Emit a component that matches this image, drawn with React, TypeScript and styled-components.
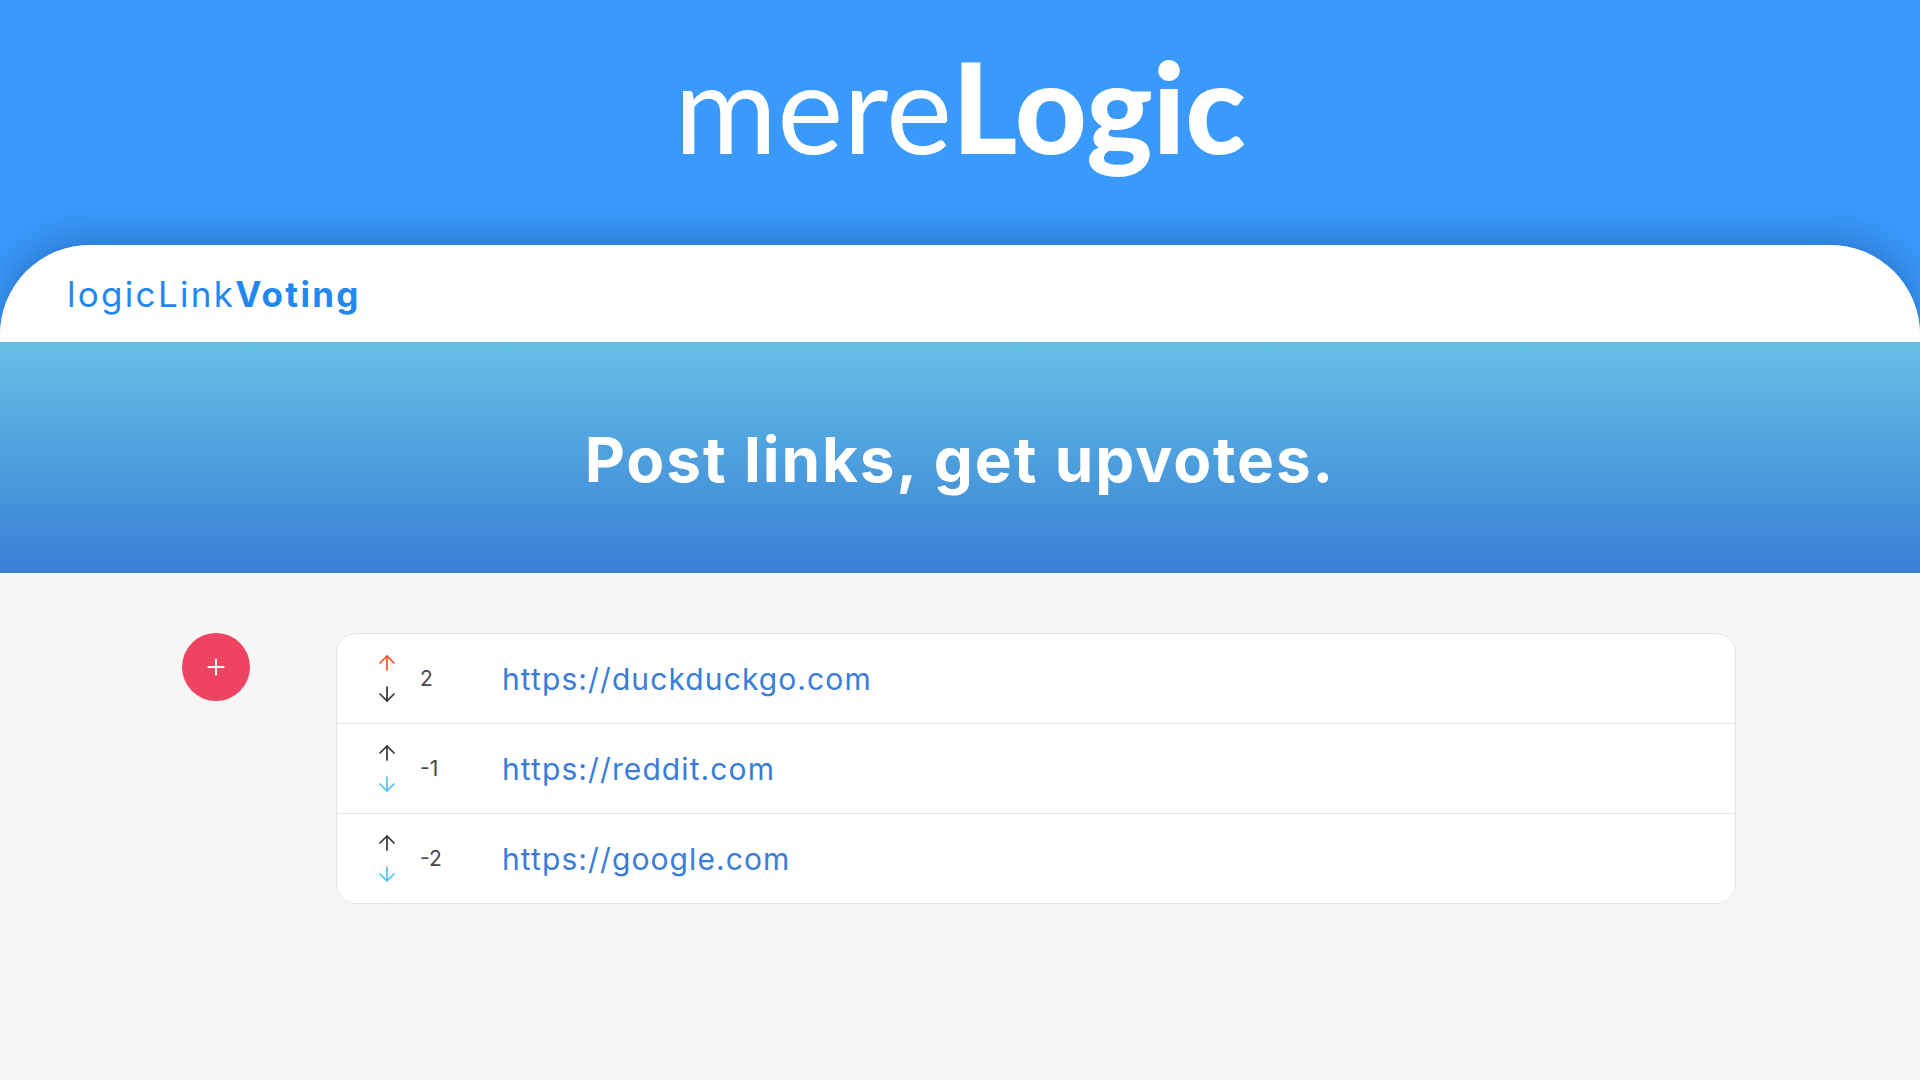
import React from "react";
import styled, { createGlobalStyle } from "styled-components";
import { ArrowUp, ArrowDown, Plus } from "lucide-react";

type Vote = "up" | "down" | null;

const links: { url: string; score: number; vote: Vote }[] = [
  { url: "https://duckduckgo.com", score: 2, vote: "up" },
  { url: "https://reddit.com", score: -1, vote: "down" },
  { url: "https://google.com", score: -2, vote: "down" },
];

const App = () => {
  return (
    <Page>
      <GlobalStyle />
      <Header>
        <Brand>
          mere<strong>Logic</strong>
        </Brand>
      </Header>
      <Card>
        <Nav>
          <AppName>
            logicLink<strong>Voting</strong>
          </AppName>
        </Nav>
        <Hero>
          <Tagline>Post links, get upvotes.</Tagline>
        </Hero>
        <Content>
          <AddButton aria-label="Add link">
            <Plus size={26} strokeWidth={1.8} />
          </AddButton>
          <LinkList>
            {links.map((link) => (
              <Row key={link.url}>
                <Votes>
                  <VoteButton $active={link.vote === "up"} $kind="up">
                    <ArrowUp size={24} strokeWidth={1.7} />
                  </VoteButton>
                  <VoteButton $active={link.vote === "down"} $kind="down">
                    <ArrowDown size={24} strokeWidth={1.7} />
                  </VoteButton>
                </Votes>
                <Score>{link.score}</Score>
                <Url href={link.url}>{link.url}</Url>
              </Row>
            ))}
          </LinkList>
        </Content>
      </Card>
    </Page>
  );
};

export default App;

const GlobalStyle = createGlobalStyle`
  html, body {
    margin: 0;
    padding: 0;
  }
  body {
    font-family: Inter, "Open Sans", sans-serif;
    background: #3a9afc;
  }
`;

const Page = styled.div`
  min-height: 100vh;
  display: flex;
  flex-direction: column;
  background: #3a9afc;
  overflow: hidden;
`;

const Header = styled.header`
  height: 245px;
  box-sizing: border-box;
  padding-top: 44px;
  display: flex;
  justify-content: center;
  align-items: flex-start;
`;

const Brand = styled.h1`
  margin: 0;
  font-family: Lato, sans-serif;
  font-size: 125px;
  line-height: 1;
  font-weight: 400;
  color: #ffffff;

  strong {
    font-weight: 900;
  }
`;

const Card = styled.main`
  flex: 1;
  display: flex;
  flex-direction: column;
  background: #f6f6f6;
  border-radius: 90px 90px 0 0;
  overflow: hidden;
  box-shadow: 0 -6px 40px rgba(10, 40, 100, 0.35);
`;

const Nav = styled.nav`
  height: 97px;
  background: #ffffff;
  display: flex;
  align-items: center;
  padding-left: 67px;
`;

const AppName = styled.div`
  font-family: Inter, sans-serif;
  font-size: 35px;
  font-weight: 400;
  color: #2288f0;
  letter-spacing: 2.3px;

  strong {
    font-weight: 700;
  }
`;

const Hero = styled.section`
  height: 231px;
  display: flex;
  align-items: center;
  justify-content: center;
  background: linear-gradient(180deg, #65c0e6 0%, #4ea0de 50%, #3a7ed6 100%);
`;

const Tagline = styled.h2`
  margin: 4px 0 0;
  font-family: Inter, sans-serif;
  font-size: 62px;
  font-weight: 700;
  color: #ffffff;
  letter-spacing: 1.9px;
`;

const Content = styled.section`
  display: flex;
  align-items: flex-start;
  gap: 86px;
  padding: 60px 184px 80px 182px;
`;

const AddButton = styled.button`
  width: 68px;
  height: 68px;
  flex-shrink: 0;
  border: none;
  border-radius: 50%;
  background: #ef4461;
  color: #ffffff;
  display: flex;
  align-items: center;
  justify-content: center;
  cursor: pointer;
  padding: 0;
`;

const LinkList = styled.ul`
  flex: 1;
  margin: 0;
  padding: 0;
  list-style: none;
  background: #ffffff;
  border: 1px solid #e4e4e4;
  border-radius: 20px;
  overflow: hidden;
`;

const Row = styled.li`
  height: 89px;
  display: flex;
  align-items: center;
  padding-left: 38px;
  border-top: 1px solid #e6e6e6;

  &:first-child {
    border-top: none;
  }
`;

const Votes = styled.div`
  display: flex;
  flex-direction: column;
  align-items: center;
  gap: 7px;
  width: 24px;
`;

const VoteButton = styled.span<{ $active: boolean; $kind: "up" | "down" }>`
  display: flex;
  color: ${({ $active, $kind }) =>
    !$active ? "#333333" : $kind === "up" ? "#f4511e" : "#4fc3f7"};
`;

const Score = styled.span`
  width: 82px;
  margin-left: 21px;
  font-family: Inter, sans-serif;
  font-size: 21px;
  color: #484848;
`;

const Url = styled.a`
  font-family: Inter, sans-serif;
  font-size: 30px;
  font-weight: 400;
  color: #3a7dd8;
  letter-spacing: 1.1px;
  text-decoration: none;
`;
